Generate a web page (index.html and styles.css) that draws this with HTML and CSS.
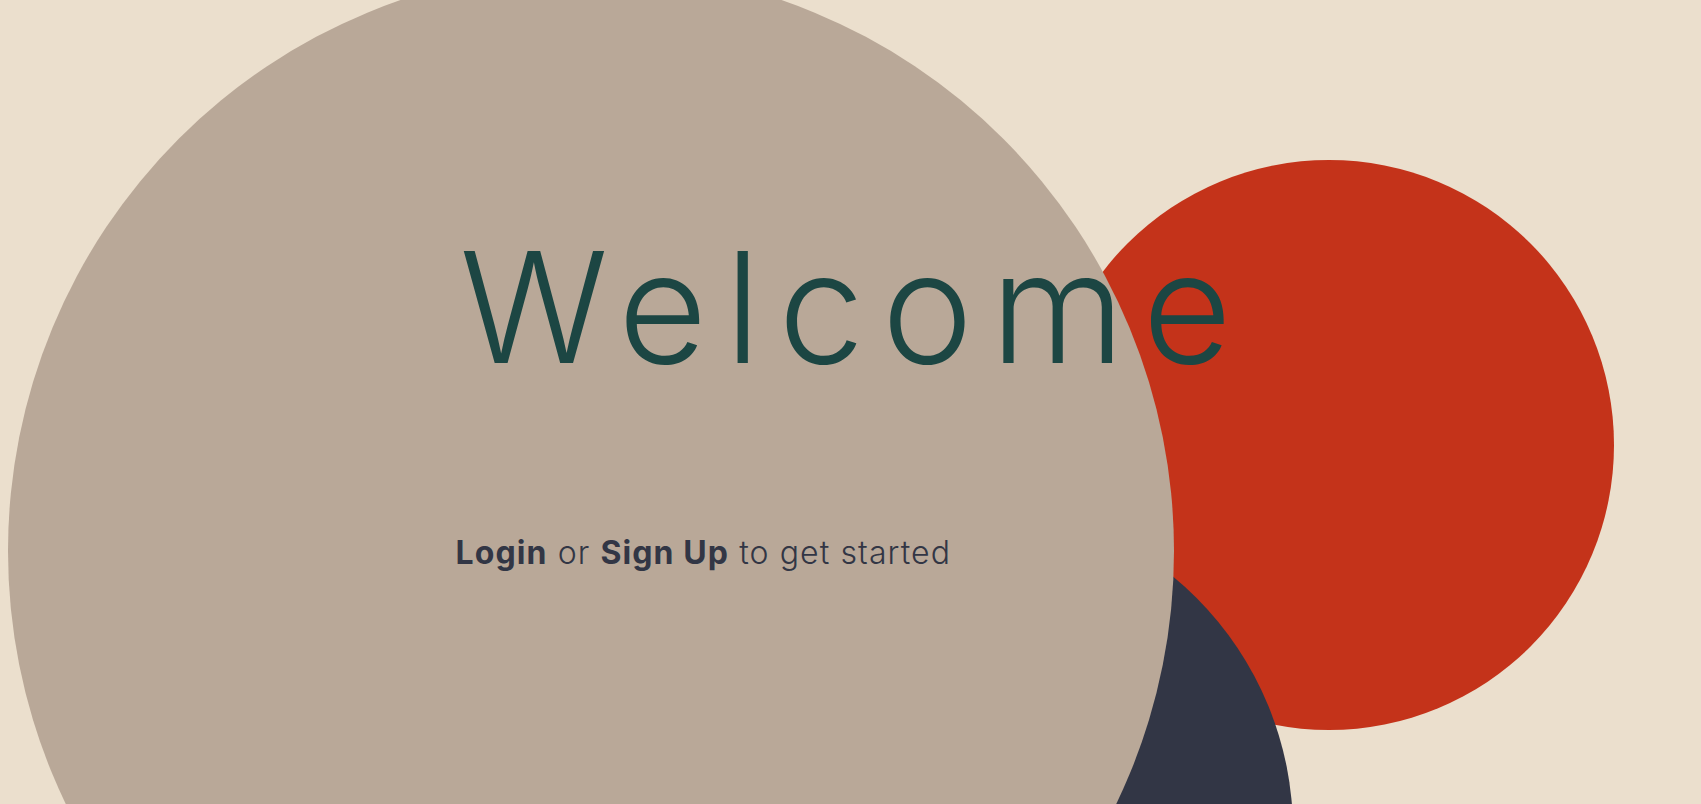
FILE: index.html
```html
<!DOCTYPE html>
<html lang="en">
<head>
<meta charset="utf-8">
<title>Welcome</title>
<link rel="stylesheet" href="styles.css">
</head>
<body>
<main class="stage">
  <div class="shapes" aria-hidden="true">
    <div class="circle circle-red"></div>
    <div class="circle circle-dark"></div>
    <div class="circle circle-sand"></div>
  </div>
  <section class="content">
    <h1 class="title">Welcome</h1>
    <p class="subtitle"><a class="link" href="#">Login</a> or <a class="link" href="#">Sign Up</a> to get started</p>
  </section>
</main>
</body>
</html>
```
FILE: styles.css
```css
html, body {
  margin: 0;
  padding: 0;
}
body {
  background: #ebdfcd;
  font-family: Inter, "Noto Sans", sans-serif;
  overflow: hidden;
}
.stage {
  position: relative;
  height: 804px;
  overflow: hidden;
}
.shapes {
  position: absolute;
  inset: 0;
}
.circle {
  position: absolute;
  border-radius: 50%;
}
.circle-sand {
  left: 8px;
  top: -32px;
  width: 1166px;
  height: 1166px;
  background: #b9a898;
}
.circle-red {
  left: 1044px;
  top: 160px;
  width: 570px;
  height: 570px;
  background: #c4331a;
}
.circle-dark {
  left: 633px;
  top: 501px;
  width: 660px;
  height: 660px;
  background: #323645;
}
.content {
  position: relative;
  width: 790px;
  margin: 0 auto;
  padding-top: 230px;
  display: flex;
  flex-direction: column;
}
.title {
  margin: 0;
  padding-left: 4px;
  font-size: 154px;
  line-height: 1;
  font-weight: 300;
  color: #1c4643;
  text-align: center;
  letter-spacing: 17.5px;
}
.subtitle {
  margin: 153px 0 0;
  font-size: 32px;
  line-height: 1;
  font-weight: 300;
  color: #323645;
  letter-spacing: 1.1px;
}
.link {
  color: inherit;
  text-decoration: none;
  font-weight: 700;
}
```
